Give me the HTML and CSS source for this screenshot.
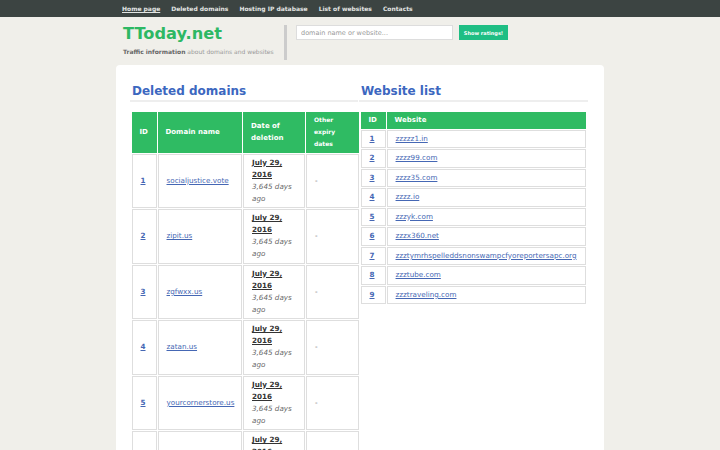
FILE: index.html
```html
<!DOCTYPE html>
<html>
<head>
<meta charset="utf-8">
<link rel="stylesheet" href="styles.css">
</head>
<body>
<nav class="topnav">
  <div class="wrap navlinks">
    <a class="active" href="#">Home page</a>
    <a href="#">Deleted domains</a>
    <a href="#">Hosting IP database</a>
    <a href="#">List of websites</a>
    <a href="#">Contacts</a>
  </div>
</nav>
<header class="wrap head">
  <div class="brand">
    <div class="logo">TToday.net</div>
    <div class="tagline"><b>Traffic information</b> about domains and websites</div>
  </div>
  <div class="divider"></div>
  <form class="search">
    <input type="text" placeholder="domain name or website...">
    <button type="button">Show ratings!</button>
  </form>
</header>
<main class="wrap panel">
  <section class="col">
    <h2>Deleted domains</h2>
    <table class="grid del">
      <thead>
        <tr><th class="c-id">ID</th><th class="c-dom">Domain name</th><th class="c-date">Date of deletion</th><th class="c-oth">Other expiry dates</th></tr>
      </thead>
      <tbody>
        <tr><td class="id"><a href="#">1</a></td><td><a href="#">socialjustice.vote</a></td><td><a class="d" href="#">July 29, 2016</a><br><i>3,645 days ago</i></td><td class="dash">-</td></tr>
        <tr><td class="id"><a href="#">2</a></td><td><a href="#">zipit.us</a></td><td><a class="d" href="#">July 29, 2016</a><br><i>3,645 days ago</i></td><td class="dash">-</td></tr>
        <tr><td class="id"><a href="#">3</a></td><td><a href="#">zgfwxx.us</a></td><td><a class="d" href="#">July 29, 2016</a><br><i>3,645 days ago</i></td><td class="dash">-</td></tr>
        <tr><td class="id"><a href="#">4</a></td><td><a href="#">zatan.us</a></td><td><a class="d" href="#">July 29, 2016</a><br><i>3,645 days ago</i></td><td class="dash">-</td></tr>
        <tr><td class="id"><a href="#">5</a></td><td><a href="#">yourcornerstore.us</a></td><td><a class="d" href="#">July 29, 2016</a><br><i>3,645 days ago</i></td><td class="dash">-</td></tr>
        <tr><td class="id"><a href="#">6</a></td><td><a href="#">yourbrand.us</a></td><td><a class="d" href="#">July 29, 2016</a><br><i>3,645 days ago</i></td><td class="dash">-</td></tr>
      </tbody>
    </table>
  </section>
  <section class="col">
    <h2>Website list</h2>
    <table class="grid web">
      <thead>
        <tr><th class="w-id">ID</th><th>Website</th></tr>
      </thead>
      <tbody>
        <tr><td class="id"><a href="#">1</a></td><td><a href="#">zzzzz1.in</a></td></tr>
        <tr><td class="id"><a href="#">2</a></td><td><a href="#">zzzz99.com</a></td></tr>
        <tr><td class="id"><a href="#">3</a></td><td><a href="#">zzzz35.com</a></td></tr>
        <tr><td class="id"><a href="#">4</a></td><td><a href="#">zzzz.io</a></td></tr>
        <tr><td class="id"><a href="#">5</a></td><td><a href="#">zzzyk.com</a></td></tr>
        <tr><td class="id"><a href="#">6</a></td><td><a href="#">zzzx360.net</a></td></tr>
        <tr><td class="id"><a href="#">7</a></td><td><a href="#">zzztymrhspelleddsnonswampcfyoreportersapc.org</a></td></tr>
        <tr><td class="id"><a href="#">8</a></td><td><a href="#">zzztube.com</a></td></tr>
        <tr><td class="id"><a href="#">9</a></td><td><a href="#">zzztraveling.com</a></td></tr>
      </tbody>
    </table>
  </section>
</main>
</body>
</html>
```
FILE: styles.css
```css
* { box-sizing: border-box; }
html, body { margin: 0; padding: 0; }
body {
  background: #f0efea;
  font-family: "DejaVu Sans", sans-serif;
  color: #555;
  font-size: 8px;
}
.wrap { width: 488px; margin: 0 auto; }
.topnav { background: #3c4442; height: 17px; }
.navlinks { display: flex; gap: 11px; padding-left: 6px; height: 17px; align-items: center; }
.navlinks a {
  color: #e2e5e3; font-weight: bold; font-size: 6px; text-decoration: none;
}
.navlinks a.active { text-decoration: underline; }
.head { display: flex; align-items: flex-start; height: 48px; padding-top: 8px; padding-left: 7px; }
.brand { width: 155px; }
.logo { color: #2db864; font-weight: bold; font-size: 16.2px; line-height: 18px; }
.tagline { font-size: 6px; color: #999; margin-top: 5px; white-space: nowrap; }
.tagline b { color: #666; }
.divider { width: 3px; height: 35px; background: #ccc; margin: 0 0 0 6px; }
.search { display: flex; gap: 6px; margin-left: 9px; }
.search input {
  width: 157px; height: 15px; border: 1px solid #ddd; background: #fff;
  font-family: inherit; font-size: 6.5px; padding: 0 4px; outline: none;
}
.search input::placeholder { color: #999; }
.search button {
  height: 15px; width: 49px; border: 0; background: #1fbe84; color: #fff;
  font-family: inherit; font-weight: bold; font-size: 5px; padding: 0;
}
.panel {
  background: #fff; border-radius: 4px; min-height: 400px;
  padding: 18px 16px 0 16px;
  display: grid; grid-template-columns: 226px 227px; gap: 0 3px;
}
h2 {
  margin: 0 0 10px -2px; padding: 0 0 1px 2px;
  color: #3c67c0; font-size: 12px; line-height: 16px; font-weight: bold;
  border-bottom: 2px solid #eee;
}
.grid { border-collapse: separate; border-spacing: 1.5px; margin: -1.5px; }
.grid th {
  background: #2fbb63; color: #fff; font-weight: bold; font-size: 7px;
  text-align: left; padding: 2.5px 8px; line-height: 12px;
}
.grid td {
  border: 1px solid #dedede; padding: 2px 8px; line-height: 12px; font-size: 7.2px;
  vertical-align: middle; color: #666;
}
.grid a { color: #4567b4; }
.grid td.id a { font-weight: bold; }
.del { width: 229px; table-layout: fixed; }
.del .c-id { width: 25px; }
.del .c-dom { width: 84.5px; }
.del .c-date { width: 62px; }
.del th.c-oth { font-size: 6px; }
.del a.d { color: #333; font-weight: bold; }
.del td { padding: 2.25px 8px; }
.del td i { color: #666; }
.dash { color: #777; }
.web { width: 227px; }
.web .w-id { width: 26px; }
.web th { padding: 2.5px 8px; }
.web td { padding: 2.25px 8px; }
```
